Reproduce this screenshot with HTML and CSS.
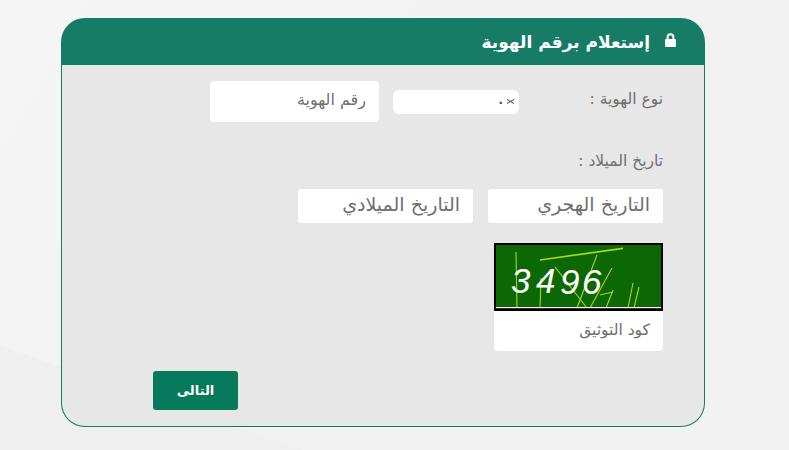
FILE: index.html
```html
<!DOCTYPE html>
<html lang="ar" dir="rtl">
<head>
<meta charset="utf-8">
<title>إستعلام برقم الهوية</title>
<link rel="stylesheet" href="styles.css">
</head>
<body>
<main class="card">
  <header class="card-head">
    <svg class="lock" viewBox="0 0 13 14" aria-hidden="true"><path d="M3.6 7V4.2a2.9 2.9 0 0 1 5.8 0V7" fill="none" stroke="#fff" stroke-width="2"/><rect x="1" y="6" width="11" height="8" rx="1.3" fill="#fff"/></svg>
    <h1 class="title">إستعلام برقم الهوية</h1>
  </header>
  <form class="card-body">
    <div class="row-id">
      <label class="label label-type">نوع الهوية :</label>
      <div class="select"><span class="select-text">.</span><svg class="chev" viewBox="0 0 9 5" aria-hidden="true"><path d="M1 .5 8 4.5M8 .5 1 4.5" fill="none" stroke="#666" stroke-width="1.1"/></svg></div>
      <div class="input-id">رقم الهوية</div>
    </div>
    <div class="label label-date">تاريخ الميلاد :</div>
    <div class="row-date">
      <div class="date">التاريخ الهجري</div>
      <div class="date">التاريخ الميلادي</div>
    </div>
    <div class="captcha">
      <svg class="captcha-img" viewBox="0 0 169 68" aria-label="3496">
        <rect x="1" y="1" width="167" height="66" fill="#0b6805" stroke="#000" stroke-width="2"/>
        <g stroke="#a9d81c" stroke-width="1.1" fill="none">
          <path d="M46 17 129 5.3" stroke-width="1.7"/>
          <path d="M22 9 23 65M47 35 46 65M103 12 83 65M61 24 93 65M118 25 96 65M106 52 119 49M119 47 112 65M139 40 134 65M145 44 140 65"/>
        </g>
        <text class="captcha-text" x="17" y="50">3</text>
        <text class="captcha-text" x="42" y="50">4</text>
        <text class="captcha-text" x="66" y="51">9</text>
        <text class="captcha-text" x="88" y="51">6</text>
        <rect x="0" y="64" width="169" height="4" fill="#000"/>
        <rect x="2" y="64" width="165" height="1.2" fill="#fff"/>
      </svg>
      <div class="captcha-label">كود التوثيق</div>
    </div>
    <button class="next" type="button">التالى</button>
  </form>
</main>
</body>
</html>
```
FILE: styles.css
```css
* { box-sizing: border-box; }
body {
  margin: 0;
  height: 450px;
  overflow: hidden;
  padding: 18px 84px 0 61px;
  font-family: "DejaVu Sans", sans-serif;
  background-color: #f2f2f2;
  background-image:
    linear-gradient(199deg, transparent 583px, #efefef 584px),
    linear-gradient(120deg, #f5f5f5 0, #f3f3f3 300px, transparent 420px);
}
.card { width: 644px; height: 409px; display: flex; flex-direction: column; }
.card-head {
  height: 47px;
  flex: none;
  background: #177c65;
  border-radius: 24px 24px 0 0;
  display: flex;
  align-items: center;
  padding: 0 28px 0 0;
  color: #fff;
}
.lock { width: 13px; height: 14px; margin-left: 14px; margin-top: -3px; flex: none; }
.title { margin: 0; font-size: 17px; font-weight: 700; line-height: 20px; }
.card-body {
  flex: 1;
  background: #e7e7e7;
  border: 1px solid #177c65;
  border-top: 0;
  border-radius: 0 0 24px 24px;
  padding: 16px 41px 0 0;
  display: flex;
  flex-direction: column;
  align-items: flex-start;
}
.row-id { display: flex; align-items: center; height: 41px; }
.label { font-size: 15.5px; line-height: 20px; color: #6f6f6f; }
.label-type { width: 144px; margin-bottom: 5px; }
.select {
  width: 126px;
  height: 24px;
  background: #fff;
  border-radius: 6px;
  display: flex;
  flex-direction: row;
  justify-content: flex-end;
  align-items: center;
  gap: 3px;
  padding: 0 4px;
  margin-left: 14px;
  direction: ltr;
}
.select-text { font-size: 12px; font-weight: 700; line-height: 12px; color: #555; margin-top: -3px; }
.chev { width: 9px; height: 5px; }
.input-id {
  width: 169px;
  height: 41px;
  background: #fff;
  border-radius: 4px;
  font-size: 16px;
  line-height: 38px;
  padding-right: 13px;
  color: #707070;
  white-space: nowrap;
}
.label-date { margin-top: 29px; }
.row-date { display: flex; gap: 15px; margin-top: 18px; }
.date {
  width: 175px;
  height: 34px;
  background: #fff;
  border-radius: 3px;
  font-size: 19px;
  line-height: 31px;
  padding-right: 13px;
  color: #6e6e6e;
  white-space: nowrap;
}
.captcha {
  width: 169px;
  height: 108px;
  margin-top: 20px;
  background: #fff;
  border-radius: 0 0 4px 4px;
  display: flex;
  flex-direction: column;
}
.captcha-img { display: block; width: 169px; height: 68px; flex: none; direction: ltr; }
.captcha-text { font: italic 35px "Liberation Sans", sans-serif; fill: #fff; direction: ltr; }
.captcha-label { font-size: 15.5px; line-height: 38px; padding-right: 13px; color: #6e6e6e; white-space: nowrap; }
.next {
  width: 85px;
  height: 39px;
  margin: 20px 425px 0 0;
  border: 0;
  border-radius: 3px;
  background: #067a5a;
  color: #fff;
  font: 700 13px "DejaVu Sans", sans-serif;
}
```
